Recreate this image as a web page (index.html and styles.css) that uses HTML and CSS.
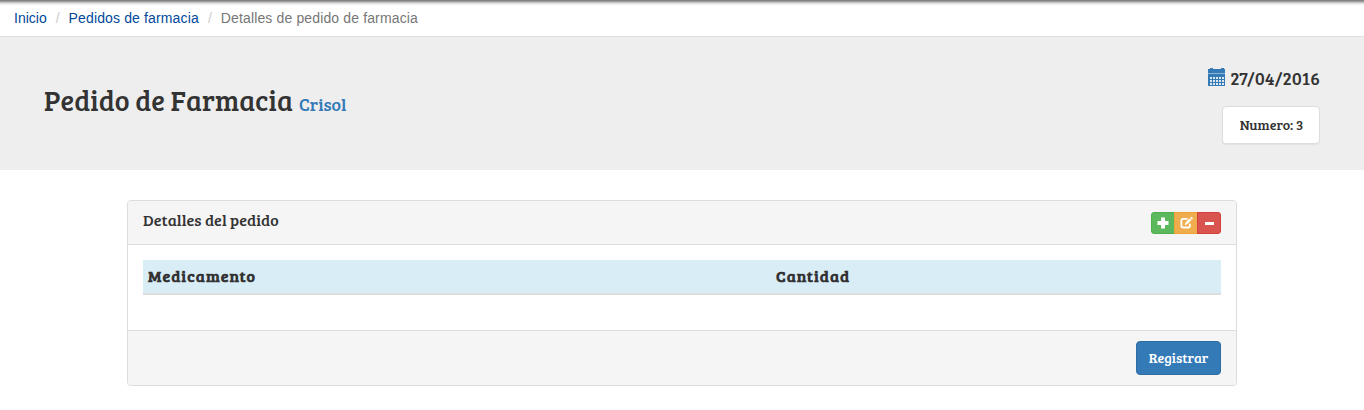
FILE: index.html
```html
<!DOCTYPE html>
<html lang="es">
<head>
<meta charset="utf-8">
<title>Detalles de pedido de farmacia</title>
<link rel="stylesheet" href="styles.css">
</head>
<body>
<ol class="breadcrumb">
  <li><a href="#">Inicio</a></li>
  <li><a href="#" class="spaced">Pedidos de farmacia</a></li>
  <li class="active"><span class="spaced">Detalles de pedido de farmacia</span></li>
</ol>
<header class="hero">
  <h1 class="title"><span class="title-main">Pedido de Farmacia</span><small class="title-sub">Crisol</small></h1>
  <div class="meta">
    <div class="date">
      <svg class="calendar" width="18" height="18" viewBox="0 0 18 18" shape-rendering="crispEdges"><path fill="#337ab7" d="M2 0h3v1h8V0h3v1h2v4H0V1h2zM0 6h17v12H0z"/><path fill="#8fb5d6" d="M0 5h17v1H0z"/><path fill="#dce6ef" d="M2 9h2v2H2zM5 9h2v2H5zM8 9h2v2H8zM11 9h2v2h-2zM14 9h2v2h-2zM2 12h2v2H2zM5 12h2v2H5zM8 12h2v2H8zM11 12h2v2h-2zM14 12h2v2h-2zM2 15h2v2H2zM5 15h2v2H5zM8 15h2v2H8zM11 15h2v2h-2zM14 15h2v2h-2z"/><path fill="#eee" d="M17 1h1v4h-1z"/></svg>
      <span class="date-text">27/04/2016</span>
    </div>
    <div class="number">Numero: 3</div>
  </div>
</header>
<main class="panel">
  <div class="panel-heading">
    <h2 class="panel-title">Detalles del pedido</h2>
    <div class="btn-group">
      <button class="btn-xs success" aria-label="Agregar"><svg width="12" height="12" viewBox="0 0 12 12"><path fill="#fff" d="M4 .5h4V4h3.5v4H8v3.5H4V8H.5V4H4z"/></svg></button>
      <button class="btn-xs warning" aria-label="Editar"><svg width="13" height="12" viewBox="0 0 13 12"><path fill="none" stroke="#fff" stroke-width="1.8" d="M7.5 1.9H3.2Q1.4 1.9 1.4 3.7v5q0 1.8 1.8 1.8h4.9q1.8 0 1.8-1.8V6.8"/><path fill="#fff" d="M4.7 8l.8-2.6L9.7 1.2l1.8 1.8-4.2 4.2zM10.2.7l.7-.7q.4-.2.8.1l1 1q.3.4 0 .8l-.7.7z"/></svg></button>
      <button class="btn-xs danger" aria-label="Quitar"><svg width="12" height="12" viewBox="0 0 12 12"><path fill="#fff" d="M2 5h9v3H2z"/></svg></button>
    </div>
  </div>
  <div class="panel-body">
    <table class="table">
      <thead><tr><th class="col-med">Medicamento</th><th>Cantidad</th></tr></thead>
    </table>
  </div>
  <div class="panel-footer"><button class="btn-primary">Registrar</button></div>
</main>
</body>
</html>
```
FILE: styles.css
```css
* { box-sizing: border-box; }
body {
  margin: 0;
  background: #fff;
  color: #333;
  font-family: "Bree Serif", "DejaVu Serif Condensed", "DejaVu Serif", serif;
  font-size: 14px;
}
h1, h2 { margin: 0; font-weight: 400; }
button { font: inherit; margin: 0; }
.breadcrumb {
  display: flex;
  height: 37px;
  margin: 0;
  padding: 8px 14px;
  list-style: none;
  border-bottom: 1px solid #e0e0e0;
  background: linear-gradient(#777 0, #8c8c8c 1px, #b0b0b0 2px, #d4d4d4 3px, #efefef 4px, #fff 6px);
  font: 14px/20px "Helvetica Neue", Helvetica, "Liberation Sans", Arial, sans-serif;
}
.breadcrumb li + li::before { content: "/"; padding: 0 9px; color: #ccc; }
.breadcrumb a { color: #01499b; text-decoration: none; }
.breadcrumb .spaced { letter-spacing: .14px; }
.breadcrumb .active { color: #777; }
.hero {
  display: flex;
  justify-content: space-between;
  height: 133px;
  padding: 30px 44px 0;
  background: #eee;
}
.title { display: flex; align-items: baseline; padding-top: 13px; line-height: 40px; white-space: nowrap; }
.title-main { width: 255px; font-size: 28px; letter-spacing: .1px; }
.title-sub { color: #337ab7; font-size: 18px; }
.meta { display: flex; flex-direction: column; align-items: flex-end; }
.date { display: flex; gap: 4px; height: 39px; padding-top: 1px; font-size: 18px; line-height: 20px; white-space: nowrap; }
.date-text { letter-spacing: .2px; }
.number {
  width: 98px;
  height: 38px;
  padding-left: 1px;
  border: 1px solid #ddd;
  border-radius: 4px;
  background: #fff;
  box-shadow: 0 1px 1px rgba(0, 0, 0, .05);
  font-size: 14px;
  line-height: 36px;
  text-align: center;
  white-space: nowrap;
}
.panel {
  width: 1110px;
  height: 186px;
  margin: 30px auto 0;
  border: 1px solid #ddd;
  border-radius: 4px;
  box-shadow: 0 1px 1px rgba(0, 0, 0, .05);
  overflow: hidden;
}
.panel-heading {
  display: flex;
  justify-content: space-between;
  height: 44px;
  padding: 11px 15px 0;
  border-bottom: 1px solid #ddd;
  background: #f5f5f5;
}
.panel-title { font-size: 16px; line-height: 15px; letter-spacing: .08px; white-space: nowrap; }
.btn-group { display: flex; }
.btn-xs {
  display: flex;
  align-items: center;
  justify-content: center;
  width: 24px;
  height: 22px;
  padding: 0;
  border: 1px solid;
}
.btn-xs + .btn-xs { margin-left: -1px; }
.success { border-color: #4cae4c; border-radius: 3px 0 0 3px; background: #5cb85c; }
.warning { border-color: #eea236; background: #f0ad4e; }
.danger { border-color: #d43f3a; border-radius: 0 3px 3px 0; background: #d9534f; }
.panel-body { height: 85px; padding: 15px; }
.table { width: 100%; border-collapse: separate; border-spacing: 0; table-layout: fixed; }
.table th {
  height: 35px;
  padding: 0 5px 2px;
  border-bottom: 2px solid #ddd;
  background: #d9edf7;
  font-size: 16px;
  line-height: 20px;
  letter-spacing: 1.06px;
  text-align: left;
}
.table .col-med { width: 628px; }
.panel-footer {
  display: flex;
  justify-content: flex-end;
  height: 55px;
  padding: 10px 15px;
  border-top: 1px solid #ddd;
  background: #f5f5f5;
}
.btn-primary {
  width: 85px;
  height: 34px;
  padding: 0 0 2px;
  border: 1px solid #2e6da4;
  border-radius: 4px;
  background: #337ab7;
  color: #fff;
  font-size: 14px;
}
```
